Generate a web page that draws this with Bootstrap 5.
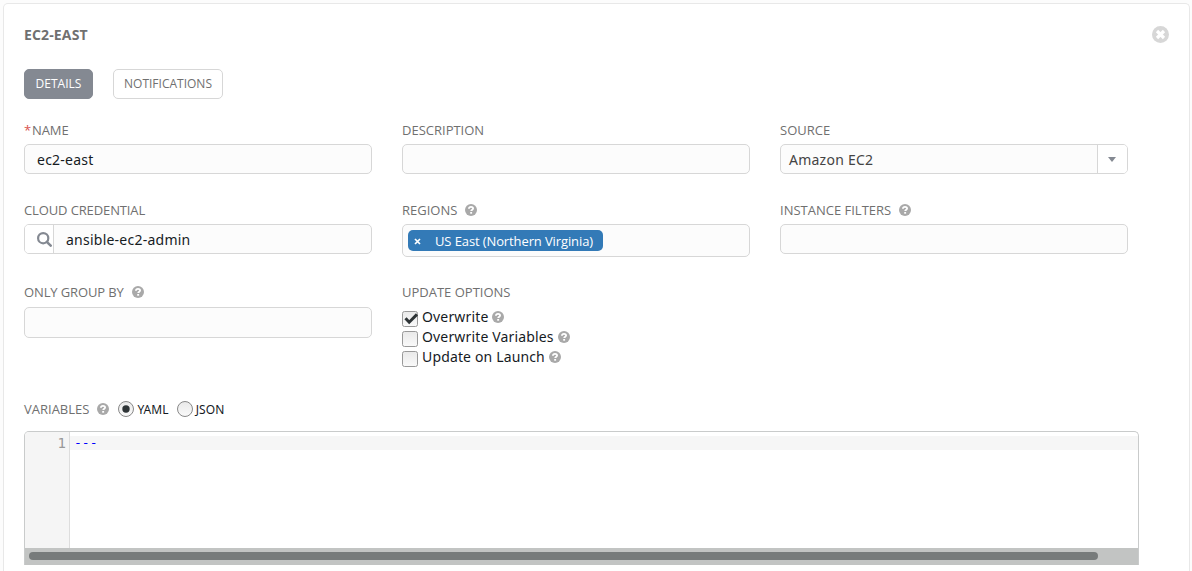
<!DOCTYPE html>
<html lang="en">
<head>
<meta charset="utf-8">
<meta name="viewport" content="width=device-width, initial-scale=1">
<title>EC2-EAST</title>
<link href="https://cdn.jsdelivr.net/npm/bootstrap@5.3.0/dist/css/bootstrap.min.css" rel="stylesheet">
<style>
  body { font-family: "Open Sans", "Noto Sans", sans-serif; font-size: 14px; line-height: 20px; color: #161b1f; background: #fcfcfc; overflow: hidden; }
  .panel { margin: 3px 2px 0 3px; height: calc(100vh - 3px); padding: 21px 20px 0; border: 1px solid #e8e8e8; border-bottom: 0; border-radius: 5px 5px 0 0; }
  .panel-title { font-size: 14px; font-weight: 700; line-height: 20px; color: #707070; letter-spacing: .15px; }
  .close-icon { margin-top: -1px; }
  .tab-btn { width: 110px; height: 30px; padding: 0; font-size: 12px; line-height: 28px; border: 1px solid #d7d7d7; border-radius: 5px; color: #707070; background: #fff; }
  .tab-btn.current { width: 69px; background: #848992; border-color: #848992; color: #fff; }
  .tabs { gap: 20px; margin-top: 24px; }
  .fields { width: 1104px; margin-top: 21px; }
  .fields .row { --bs-gutter-x: 30px; }
  .row-two { margin-top: 26px; }
  .row-three { margin-top: 25px; }
  .field-label { display: flex; align-items: center; height: 20px; margin-bottom: 4px; font-size: 13px; color: #707070; white-space: nowrap; }
  .col-4:first-child .field-label { letter-spacing: -.12px; }
  .row-three .field-label { margin-bottom: 5px; }
  .help { width: 12px; height: 12px; flex: none; }
  .field-label .help { margin-left: 8px; }
  .field-box { height: 30px; border: 1px solid #d7d7d7; border-radius: 5px; background: #fcfcfc; padding: 0 12px; font-size: 14px; line-height: 29px; color: #161b1f; }
  .field-text, .option span { font-family: "Noto Sans", sans-serif; }
  .field-text { letter-spacing: .24px; }
  .end-cap { width: 30px; background: #fff; border-left: 1px solid #d7d7d7; border-radius: 0 4px 4px 0; padding-right: 2px; }
  .start-cap { width: 29px; background: #fff; border-right: 1px solid #d7d7d7; border-radius: 4px 0 0 4px; padding-left: 12px; }
  .tag { height: 21px; width: 195px; padding: 1px 0 0 6px; border-radius: 5px; background: #337ab7; color: #fff; font-size: 13px; letter-spacing: -.11px; line-height: 20px; white-space: nowrap; }
  .option { height: 20px; gap: 4px; }
  .option span { letter-spacing: .15px; }
  .option svg:first-child { margin-top: 3px; }
  .vars { margin-top: 32px; height: 20px; }
  .vars-choice { font-size: 12px; gap: 3px; }
  .vars-choice span { font-family: "Noto Sans", sans-serif; letter-spacing: .1px; padding-top: 1px; }
  .editor { width: 1115px; height: 134px; margin-top: 12px; border: 1px solid #c9cbcb; border-bottom: 0; border-radius: 5px 5px 0 0; background: #fff; font-family: "DejaVu Sans Mono", monospace; font-size: 13px; line-height: 14px; overflow: hidden; }
  .gutter { width: 45px; background: #f5f5f5; border-right: 1px solid #ddd; color: #999; padding: 4px 3px 0 0; font-size: 14px; }
  .code-line { height: 14px; margin-top: 4px; padding-left: 4px; background: #f6f6f6; color: #00f; }
  .track { height: 17px; background: #c2c4c3; padding: 4px 40px 0 4px; }
  .thumb { height: 8px; border-radius: 4px; background: #777b7b; }
</style>
</head>
<body>
<svg width="0" height="0" class="position-absolute">
  <symbol id="help" viewBox="0 0 12 12">
    <circle cx="6" cy="6" r="6" fill="#a9a9a9"/>
    <path d="M3.900 4.700C4 3.300 4.900 2.800 6 2.800c1.100 0 2.100.6 2.100 1.600C8.100 5.700 6.200 5.600 6.200 7.100" fill="none" stroke="#fff" stroke-width="1.800"/>
    <rect x="5.200" y="8" width="1.900" height="1.700" fill="#fff"/>
  </symbol>
  <linearGradient id="shade" x1="0" y1="0" x2="0" y2="1"><stop offset="0" stop-color="#e9e9e9"/><stop offset="1" stop-color="#fafafa"/></linearGradient>
  <symbol id="box" viewBox="0 0 16 16"><rect x=".5" y=".5" width="15" height="15" rx="2" fill="url(#shade)" stroke="#999"/></symbol>
</svg>
<main class="panel bg-white">
  <header class="d-flex justify-content-between align-items-center">
    <h1 class="panel-title mb-0">EC2-EAST</h1>
    <svg class="close-icon" width="17" height="17" viewBox="0 0 17 17"><circle cx="8.500" cy="8.500" r="8.500" fill="#d7d7d7"/><path d="M5 5l7 7M12 5l-7 7" stroke="#fff" stroke-width="3.200"/></svg>
  </header>
  <nav class="tabs d-flex">
    <button class="tab-btn current">DETAILS</button>
    <button class="tab-btn">NOTIFICATIONS</button>
  </nav>
  <form class="fields">
    <div class="row">
      <div class="col-4"><label class="field-label"><span style="color:#d9534f">*</span><span style="padding-left:1px">NAME</span></label><div class="field-box field-text">ec2-east</div></div>
      <div class="col-4"><label class="field-label">DESCRIPTION</label><div class="field-box"></div></div>
      <div class="col-4"><label class="field-label">SOURCE</label>
        <div class="field-box d-flex justify-content-between p-0"><span class="field-text ps-2" style="color:#444">Amazon EC2</span>
          <span class="end-cap d-flex align-items-center justify-content-center"><svg width="8" height="5" viewBox="0 0 8 5"><path d="M0 0h8L4 5z" fill="#848992"/></svg></span></div></div>
    </div>
    <div class="row row-two">
      <div class="col-4"><label class="field-label">CLOUD CREDENTIAL</label>
        <div class="field-box d-flex p-0"><span class="start-cap d-flex align-items-center"><svg width="15" height="15" viewBox="0 0 15 15" fill="none" stroke="#848992"><circle cx="6.200" cy="6.200" r="5.100" stroke-width="2.200"/><path d="M9.800 9.800l3.900 3.900" stroke-width="2.500" stroke-linecap="round"/></svg></span><span class="field-text" style="padding-left:12px">ansible-ec2-admin</span></div></div>
      <div class="col-4"><label class="field-label">REGIONS<svg class="help"><use href="#help"/></svg></label>
        <div class="field-box d-flex align-items-center" style="height:33px;padding:0 5px"><span class="tag d-flex align-items-center"><svg width="7" height="7" viewBox="0 0 7 7" style="margin:1px 14px 0 0"><path d="M1 1l5 5M6 1L1 6" stroke="#fff" stroke-width="1.700"/></svg><span>US East (Northern Virginia)</span></span></div></div>
      <div class="col-4"><label class="field-label">INSTANCE FILTERS<svg class="help"><use href="#help"/></svg></label><div class="field-box"></div></div>
    </div>
    <div class="row row-three">
      <div class="col-4"><label class="field-label">ONLY GROUP BY<svg class="help"><use href="#help"/></svg></label><div class="field-box" style="height:31px"></div></div>
      <div class="col-4"><label class="field-label">UPDATE OPTIONS</label>
        <div class="option d-flex align-items-center"><svg width="16" height="16" viewBox="0 0 16 16"><use href="#box"/><path d="M3.500 7.200l3.700 4L15 3.400" fill="none" stroke="#2e3436" stroke-width="3"/></svg><span>Overwrite</span><svg class="help"><use href="#help"/></svg></div>
        <div class="option d-flex align-items-center"><svg width="16" height="16"><use href="#box"/></svg><span>Overwrite Variables</span><svg class="help"><use href="#help"/></svg></div>
        <div class="option d-flex align-items-center"><svg width="16" height="16"><use href="#box"/></svg><span>Update on Launch</span><svg class="help"><use href="#help"/></svg></div>
      </div>
    </div>
  </form>
  <div class="vars d-flex align-items-center">
    <span class="field-label mb-0">VARIABLES<svg class="help"><use href="#help"/></svg></span>
    <label class="vars-choice d-flex align-items-center" style="margin-left:9px"><svg width="16" height="16" viewBox="0 0 16 16"><circle cx="8" cy="8" r="7.500" fill="url(#shade)" stroke="#888"/><circle cx="8" cy="8" r="3.700" fill="#2e3436"/></svg><span>YAML</span></label>
    <label class="vars-choice d-flex align-items-center ms-2"><svg width="16" height="16" viewBox="0 0 16 16"><circle cx="8" cy="8" r="7.500" fill="url(#shade)" stroke="#888"/></svg><span>JSON</span></label>
  </div>
  <section class="editor d-flex flex-column">
    <div class="d-flex flex-grow-1"><div class="gutter text-end flex-shrink-0">1</div><div class="flex-grow-1"><div class="code-line">---</div></div></div>
    <div class="track"><div class="thumb"></div></div>
  </section>
</main>
<script src="https://cdn.jsdelivr.net/npm/bootstrap@5.3.0/dist/js/bootstrap.bundle.min.js"></script>
</body>
</html>
